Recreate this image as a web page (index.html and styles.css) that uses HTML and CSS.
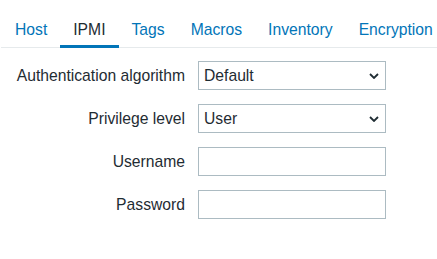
FILE: index.html
```html
<!DOCTYPE html>
<html>
<head>
<meta charset="utf-8">
<link rel="stylesheet" href="styles.css">
</head>
<body>
<ul class="tabs">
  <li class="tab">Host</li>
  <li class="tab active">IPMI</li>
  <li class="tab">Tags</li>
  <li class="tab">Macros</li>
  <li class="tab">Inventory</li>
  <li class="tab">Encryption</li>
</ul>
<div class="form">
  <label class="label">Authentication algorithm</label>
  <div class="field select"><span>Default</span><svg class="chev" width="10" height="6" viewBox="0 0 10 6"><path d="M1 1 L5 5 L9 1" fill="none" stroke="#1f2c33" stroke-width="1.8"/></svg></div>
  <label class="label">Privilege level</label>
  <div class="field select"><span>User</span><svg class="chev" width="10" height="6" viewBox="0 0 10 6"><path d="M1 1 L5 5 L9 1" fill="none" stroke="#1f2c33" stroke-width="1.8"/></svg></div>
  <label class="label">Username</label>
  <div class="field"></div>
  <label class="label">Password</label>
  <div class="field"></div>
</div>
</body>
</html>
```
FILE: styles.css
```css
html, body {
  margin: 0;
  padding: 0;
  background: #ffffff;
  font-family: "Liberation Sans", Arial, sans-serif;
  font-size: 15.7px;
  color: #1f2c33;
}
.tabs {
  list-style: none;
  margin: 0 0 0 1px;
  padding: 0 0 0 1px;
  display: flex;
  border-bottom: 1px solid #e6eaec;
}
.tab {
  padding: 21px 13px 6px;
  line-height: 18px;
  color: #0275b8;
  border-bottom: 3px solid transparent;
  margin-bottom: -1px;
}
.tab.active {
  color: #1f2c33;
  border-bottom-color: #0275b8;
}
.form {
  margin-top: 13px;
  display: grid;
  grid-template-columns: 185px 188px;
  column-gap: 13px;
  row-gap: 14px;
  align-items: center;
}
.label {
  text-align: right;
  line-height: 18px;
}
.field {
  box-sizing: border-box;
  height: 29px;
  border: 1px solid #acbbc2;
  background: #fff;
  padding: 0 6px 0 5px;
  display: flex;
  align-items: center;
  justify-content: space-between;
  line-height: 18px;
}
.chev {
  display: block;
}
```
